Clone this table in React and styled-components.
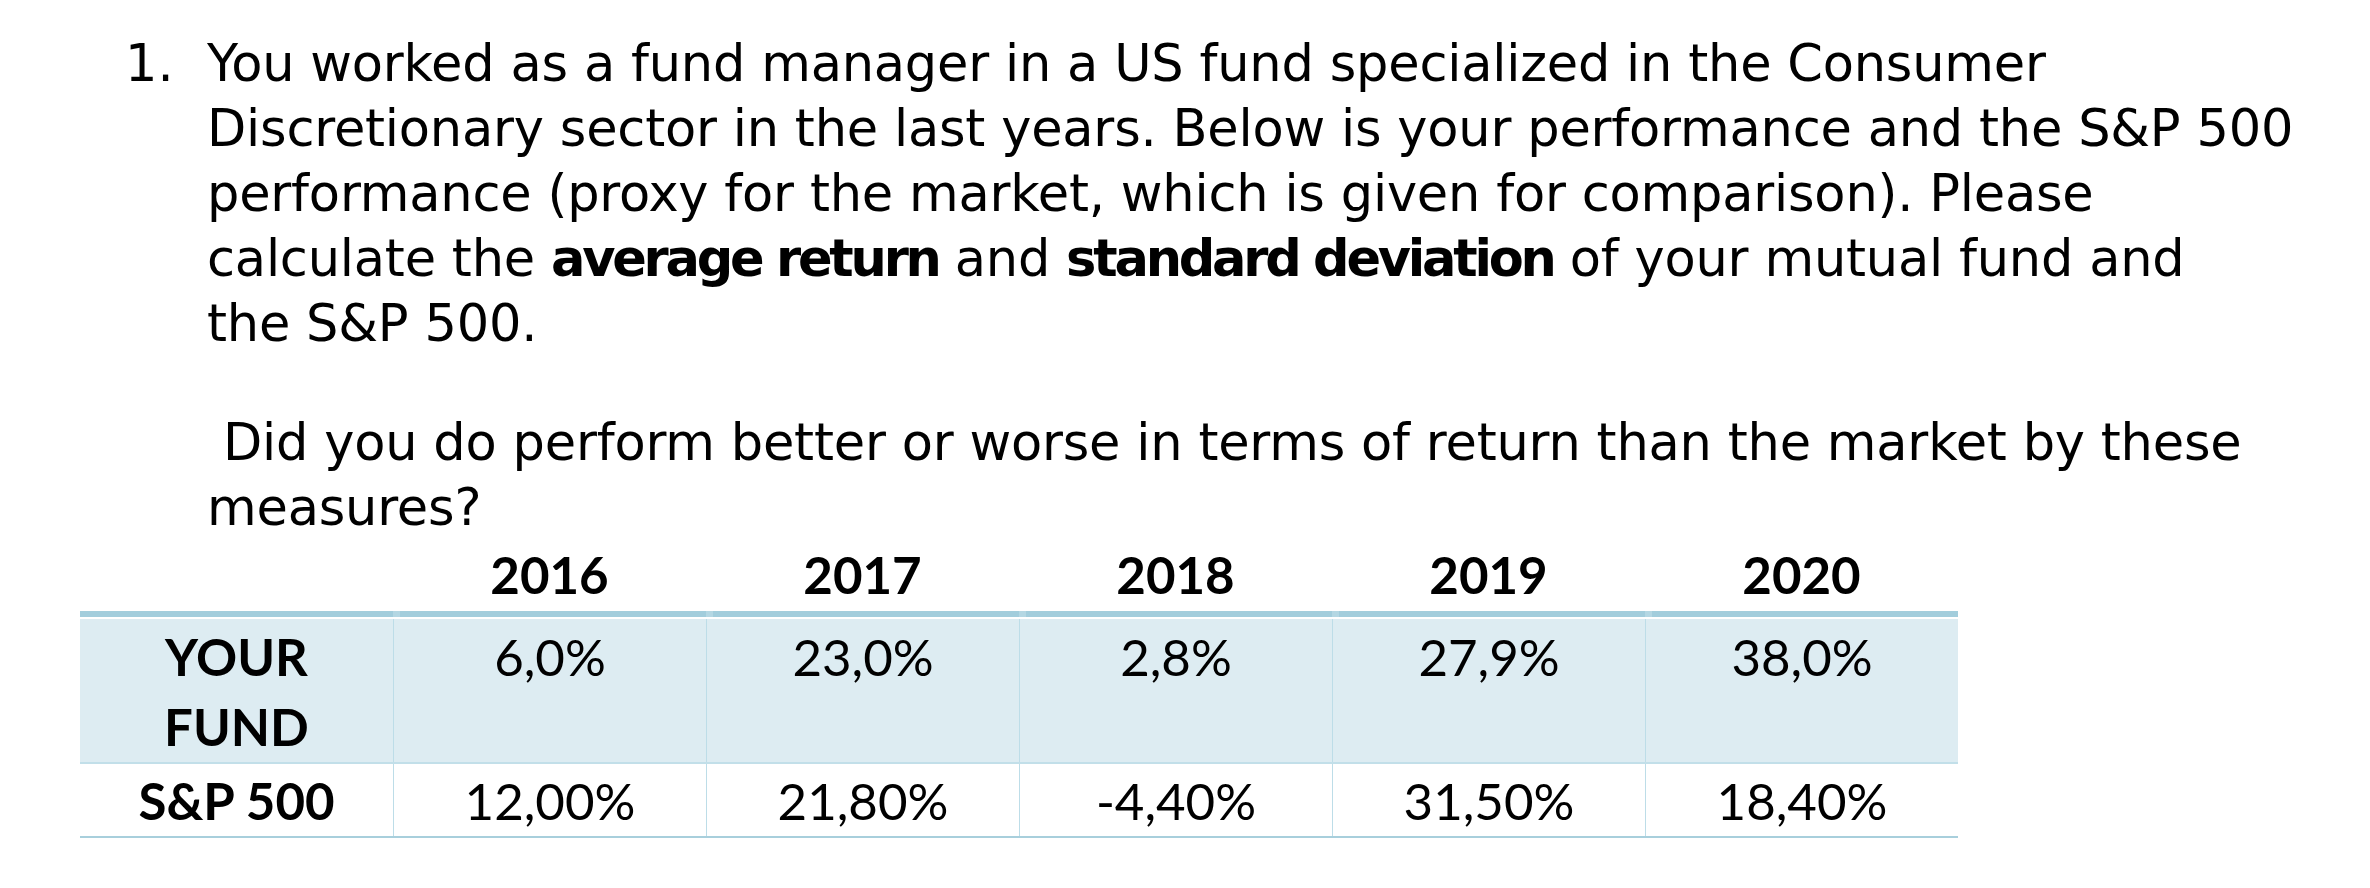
import React from 'react'
import styled, { createGlobalStyle } from 'styled-components'

const GlobalStyle = createGlobalStyle`
  html, body {
    margin: 0;
    background: #ffffff;
  }
`

const years = ['2016', '2017', '2018', '2019', '2020']
const fund = ['6,0%', '23,0%', '2,8%', '27,9%', '38,0%']
const market = ['12,00%', '21,80%', '-4,40%', '31,50%', '18,40%']

const App = () => {
  return (
    <Page>
      <GlobalStyle />
      <Item>
        <Marker>1.</Marker>
        <Body>
          <Para>
            You worked as a fund manager in a US fund specialized in the Consumer<br />
            Discretionary sector in the last years. Below is your performance and the S&amp;P 500<br />
            performance (proxy for the market, which is given for comparison). Please<br />
            calculate the <b>average return</b> and <b>standard deviation</b> of your mutual fund and<br />
            the S&amp;P 500.
          </Para>
          <Para $indent="16px">
            Did you do perform better or worse in terms of return than the market by these<br />
            measures?
          </Para>
        </Body>
      </Item>

      <Table>
        <HeadRow>
          <HeadCell />
          {years.map(y => <HeadCell key={y}>{y}</HeadCell>)}
        </HeadRow>
        <Row $shade $first $pad={3}>
          <Cell $bold>YOUR<br />FUND</Cell>
          {fund.map(v => <Cell key={v}>{v}</Cell>)}
        </Row>
        <Row $last $pad={2}>
          <Cell $bold>S&amp;P 500</Cell>
          {market.map(v => <Cell key={v}>{v}</Cell>)}
        </Row>
      </Table>
    </Page>
  )
}

export default App

const Page = styled.div`
  width: 2370px;
  height: 888px;
  box-sizing: border-box;
  padding-top: 31px;
  background: #ffffff;
  color: #000000;
  font-family: "DejaVu Sans", "Liberation Sans", sans-serif;
  overflow: hidden;
`

const Item = styled.div`
  display: flex;
  padding-left: 125px;
`

const Marker = styled.span`
  flex: none;
  width: 82px;
  font-size: 51px;
  line-height: 65px;
`

const Body = styled.div`
  display: flex;
  flex-direction: column;
  gap: 54px;
`

const Para = styled.p`
  margin: 0;
  font-size: 51px;
  line-height: 65px;
  white-space: nowrap;
  letter-spacing: -0.2px;
  text-indent: ${p => p.$indent || 0};

  b {
    font-weight: 700;
    letter-spacing: -3.2px;
  }
`

const Table = styled.div`
  width: 1878px;
  margin-left: 80px;
  font-family: Lato, "Liberation Sans", sans-serif;
  font-size: 51px;
  line-height: 70px;
`

const HeadRow = styled.div`
  display: grid;
  grid-template-columns: repeat(6, 1fr);
`

const HeadCell = styled.div`
  height: 71px;
  text-align: center;
  font-weight: 700;
  border-bottom: 6px solid #a2cddc;

  /* the thick rule is a touch lighter where the columns meet */
  & + & {
    border-image: linear-gradient(to right, #b4d7e3 0, #b4d7e3 8px, #a2cddc 8px) 1;
    border-image-width: 0 0 6px 0;
  }
`

const Row = styled.div`
  display: grid;
  grid-template-columns: repeat(6, 1fr);
  background: ${p => (p.$shade ? '#ddecf2' : '#ffffff')};
  border-top: ${p => (p.$first ? '2px solid #ffffff' : 'none')};
  border-bottom: 2px solid ${p => (p.$last ? '#a8cfdc' : '#c2dfe9')};

  & > div {
    padding-top: ${p => p.$pad}px;
  }
`

const Cell = styled.div`
  text-align: center;
  font-weight: ${p => (p.$bold ? 700 : 400)};

  & + & {
    border-left: 1px solid #bddde8;
  }
`
